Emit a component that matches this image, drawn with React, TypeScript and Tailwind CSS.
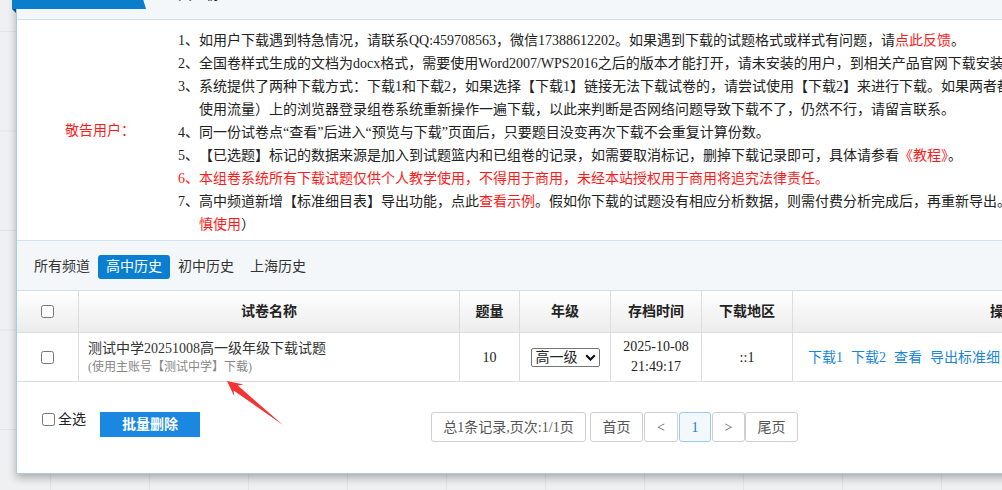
import React from "react";

const red = "text-[#ff1a1a]";

function Notice() {
  return (
    <div className="flex h-[220px] items-center">
      <div className={`w-[161px] shrink-0 pl-[48px] text-[14px] ${red}`}>敬告用户：</div>
      <div className="whitespace-nowrap pt-[5px] text-[14px] leading-[23px] text-[#222]">
        <div className="flex">
          <span>1、</span>
          <span>
            如用户下载遇到特急情况，请联系QQ:459708563，微信17388612202。如果遇到下载的试题格式或样式有问题，请
            <span className={red}>点此反馈</span>。
          </span>
        </div>
        <div className="flex">
          <span>2、</span>
          <span>全国卷样式生成的文档为docx格式，需要使用Word2007/WPS2016之后的版本才能打开，请未安装的用户，到相关产品官网下载安装。</span>
        </div>
        <div className="flex">
          <span>3、</span>
          <span>
            <span className="block">
              系统提供了两种下载方式：下载1和下载2，如果选择【下载1】链接无法下载试卷的，请尝试使用【下载2】来进行下载。如果两者都无法下载，请换用其他网络（如手机热点
            </span>
            <span className="block">
              使用流量）上的浏览器登录组卷系统重新操作一遍下载，以此来判断是否网络问题导致下载不了，仍然不行，请留言联系。
            </span>
          </span>
        </div>
        <div className="flex">
          <span>4、</span>
          <span>同一份试卷点“查看”后进入“预览与下载”页面后，只要题目没变再次下载不会重复计算份数。</span>
        </div>
        <div className="flex">
          <span>5、</span>
          <span>
            【已选题】标记的数据来源是加入到试题篮内和已组卷的记录，如需要取消标记，删掉下载记录即可，具体请参看
            <span className={red}>《教程》</span>。
          </span>
        </div>
        <div className={`flex ${red}`}>
          <span>6、</span>
          <span>本组卷系统所有下载试题仅供个人教学使用，不得用于商用，未经本站授权用于商用将追究法律责任。</span>
        </div>
        <div className="flex">
          <span>7、</span>
          <span>
            <span className="block">
              高中频道新增【标准细目表】导出功能，点此<span className={red}>查看示例</span>
              。假如你下载的试题没有相应分析数据，则需付费分析完成后，再重新导出。
              <span className={red}>（此功能处于测试阶段，请谨</span>
            </span>
            <span className="block">
              <span className={red}>慎使用</span>）
            </span>
          </span>
        </div>
      </div>
    </div>
  );
}

function Channels() {
  const tabs = ["所有频道", "高中历史", "初中历史", "上海历史"];
  return (
    <div className="flex h-[50px] border-t border-[#d3e3ef] bg-[#f4f7fa] pl-[9px] pt-[14px]">
      {tabs.map((t) => (
        <span
          key={t}
          className={
            t === "高中历史"
              ? "h-[24px] rounded-[3px] bg-[#0a7fd0] px-2 text-[14px] leading-[24px] text-white"
              : "h-[24px] px-2 text-[14px] leading-[24px] text-[#333]"
          }
        >
          {t}
        </span>
      ))}
    </div>
  );
}

function Table() {
  const head = "flex h-[42px] items-center justify-center border-r border-b border-[#dcdcdc] bg-linear-to-b from-white to-[#ececec] text-[14px] font-bold text-[#222]";
  const cell = "flex h-[49px] items-center border-b border-[#dcdcdc] text-[14px]";
  return (
    <div className="grid grid-cols-[62px_381px_60px_91px_91px_91px_1fr] border-t border-[#d3dde6]">
      <div className={head}>
        <input type="checkbox" className="h-[13px] w-[13px]" />
      </div>
      <div className={head}>试卷名称</div>
      <div className={head}>题量</div>
      <div className={head}>年级</div>
      <div className={head}>存档时间</div>
      <div className={head}>下载地区</div>
      <div className="flex h-[42px] items-center justify-center border-b border-[#dcdcdc] bg-linear-to-b from-white to-[#ececec] text-[14px] font-bold text-[#222]">
        操作
      </div>

      <div className={`${cell} justify-center border-r`}>
        <input type="checkbox" className="h-[13px] w-[13px]" />
      </div>
      <div className={`${cell} flex-col items-start justify-center border-r pl-[9px]`}>
        <span className="leading-[20px] text-[#333]">测试中学20251008高一级年级下载试题</span>
        <span className="text-[12px] leading-[16px] text-[#888]">(使用主账号【测试中学】下载)</span>
      </div>
      <div className={`${cell} justify-center border-r text-[#222]`}>10</div>
      <div className={`${cell} justify-center border-r text-[#222]`}>
        <div className="flex h-[19px] w-[69px] items-center justify-between rounded-[2px] border border-[#767676] pl-[4px] pr-[3px] text-[14px] leading-[17px]">
          <span>高一级</span>
          <svg width="11" height="7" viewBox="0 0 11 7">
            <path d="M1.2 1.2l4.3 4.3 4.3-4.3" fill="none" stroke="#111" strokeWidth="2.2" />
          </svg>
        </div>
      </div>
      <div className={`${cell} flex-col justify-center border-r leading-[20px] text-[#222]`}>
        <span>2025-10-08</span>
        <span>21:49:17</span>
      </div>
      <div className={`${cell} justify-center border-r text-[#222]`}>::1</div>
      <div className={`${cell} justify-start gap-2 pl-[15px] text-[#1a86d6]`}>
        <span>下载1</span>
        <span>下载2</span>
        <span>查看</span>
        <span>导出标准细目表</span>
        <span className="text-[#ff3b3b]">删除</span>
      </div>
    </div>
  );
}

function Footer() {
  const pg = "flex h-[30px] items-center justify-center rounded-[3px] border text-[14px]";
  return (
    <div className="flex h-[91px] items-start pl-[25px] pt-[30px]">
      <label className="flex h-[14px] items-center gap-[3px] text-[14px] text-[#222]">
        <input type="checkbox" className="h-[13px] w-[13px]" />
        全选
      </label>
      <button className="ml-[14px] h-[25px] w-[100px] bg-[#1a88e0] text-[14px] font-bold text-white">
        批量删除
      </button>
      <div className="ml-[231px] flex">
        <span className={`${pg} w-[155px] border-[#cfcfcf] text-[#555]`}>总1条记录,页次:1/1页</span>
        <span className={`${pg} ml-[4px] w-[53px] border-[#cfcfcf] text-[#555]`}>首页</span>
        <span className={`${pg} ml-[1px] w-[34px] border-[#cfcfcf] text-[#555]`}>&lt;</span>
        <span className={`${pg} ml-[1px] w-[32px] border-[#9ccbee] bg-[#f3f8fc] text-[#1a7fc8]`}>1</span>
        <span className={`${pg} ml-[1px] w-[33px] border-[#cfcfcf] text-[#555]`}>&gt;</span>
        <span className={`${pg} w-[53px] border-[#cfcfcf] text-[#555]`}>尾页</span>
      </div>
    </div>
  );
}

export default function App() {
  return (
    <div className="relative h-[490px] w-[1002px] overflow-hidden bg-[#eef0f1] bg-[linear-gradient(to_right,#e1e3e4_1px,transparent_1px),linear-gradient(to_bottom,#e1e3e4_1px,transparent_1px)] bg-size-[99px_99.5px] bg-position-[50px_31px] font-['Liberation_Serif','Noto_Sans_CJK_SC',serif]">
      <div className="relative ml-4 -mt-3 w-[1200px] border border-[#a9cbe5] bg-white shadow-[0_4px_8px_rgba(0,0,0,0.28)]">
        <div className="relative h-[31px] border-b border-[#cfe0ec] bg-[#f4f7fa]">
          <div className="absolute left-[-5px] top-0 h-[20px] w-[134px] bg-[#0a7dcb] [clip-path:polygon(0_0,calc(100%-6px)_0,100%_100%,0_100%)]" />
          <div className="absolute left-[-5px] top-[20px] h-[4px] w-[4px] bg-[#0b4f86] [clip-path:polygon(0_0,100%_0,100%_100%)]" />
          <span className="absolute left-[161px] top-[-1px] text-[14px] leading-[14px] text-[#222]">共 1 份</span>
        </div>
        <Notice />
        <Channels />
        <Table />
        <Footer />
      </div>
      <svg className="pointer-events-none absolute left-0 top-0" width="1002" height="490">
        <polygon
          points="227,381 243.4,384.4 237.8,385.6 283,425 233.6,390.4 234.2,396.2"
          fill="#f23434"
        />
      </svg>
    </div>
  );
}
